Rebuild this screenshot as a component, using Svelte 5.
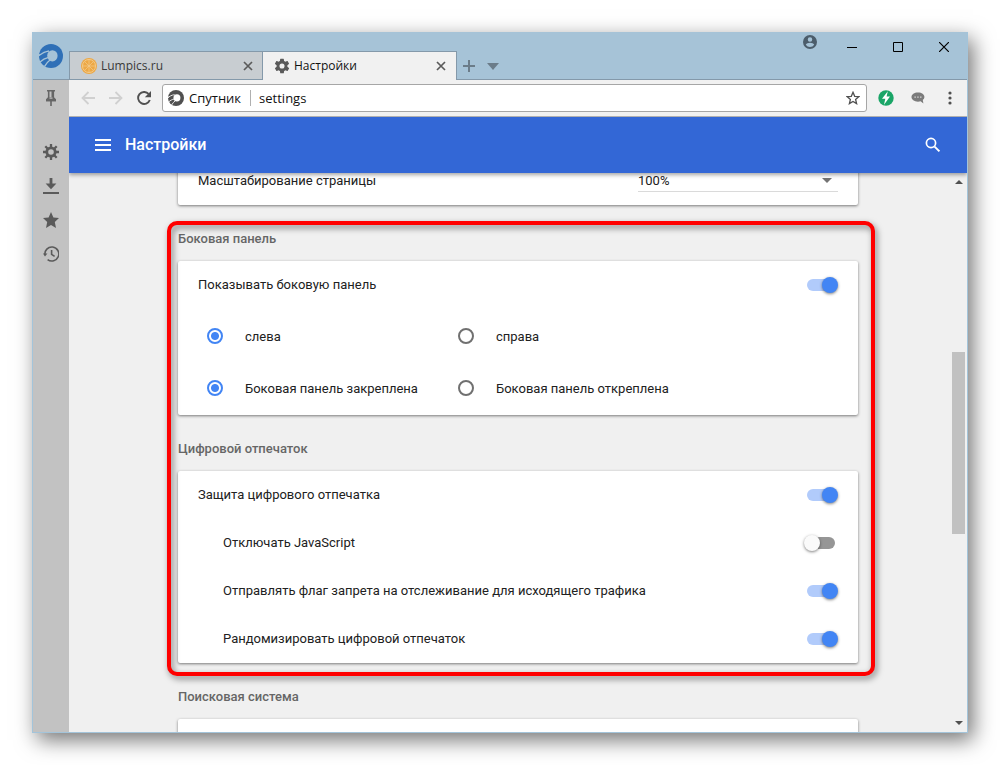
<script>
  const sideItems = [
    { id: 'settings', label: 'Настройки' },
    { id: 'downloads', label: 'Загрузки' },
    { id: 'favourites', label: 'Избранное' },
    { id: 'history', label: 'История' }
  ];

  let showPanel = $state(true);
  let side = $state('left');
  let pinned = $state('pinned');
  let zoom = $state('100%');

  let fingerprint = $state([
    { id: 'protect', label: 'Защита цифрового отпечатка', on: true, nested: false },
    { id: 'nojs', label: 'Отключать JavaScript', on: false, nested: true },
    { id: 'dnt', label: 'Отправлять флаг запрета на отслеживание для исходящего трафика', on: true, nested: true },
    { id: 'random', label: 'Рандомизировать цифровой отпечаток', on: true, nested: true }
  ]);
</script>

{#snippet swirl(id)}
  <svg class="swirl" viewBox="0 0 24 24" aria-hidden="true">
    <mask id={id}>
      <rect width="24" height="24" fill="#fff" />
      <ellipse cx="13.4" cy="11.8" rx="5.2" ry="5.6" fill="#000" />
      <path d="M-1 12.4C2 9.6 5 7.600 10 7M1 18C3.500 15.600 6 14.200 9.500 13.400M5.600 22.400C7 20 8.500 17.800 11 16" fill="none" stroke="#000" stroke-width="1.300" />
      <path d="M-1 9.500L1.500 10.500-.5 12.800z" fill="#000" />
    </mask>
    <circle cx="12" cy="12" r="12" fill="currentColor" mask="url(#{id})" />
  </svg>
{/snippet}

{#snippet cross()}
  <svg width="16" height="16" viewBox="0 0 16 16" aria-hidden="true"><path d="M4 4l8 8M12 4l-8 8" fill="none" stroke="#5a5a5a" stroke-width="1.7" /></svg>
{/snippet}

<div class="window">
  <header class="titlebar">
    <div class="brand">{@render swirl('brand-cut')}</div>
    <nav class="tabs" aria-label="Вкладки">
      <div class="tab">
        <svg width="16" height="16" viewBox="0 0 16 16" aria-hidden="true">
          <circle cx="8" cy="8" r="8" fill="#eda845" />
          <circle cx="8" cy="8" r="6.5" fill="none" stroke="#f3cb8c" stroke-width="1" />
          <path d="M8 2v12M2 8h12M3.8 3.8l8.4 8.4M12.2 3.8l-8.4 8.4" stroke="#f3cb8c" stroke-width=".7" />
        </svg>
        <span>Lumpics.ru</span>
        <button aria-label="Закрыть вкладку">{@render cross()}</button>
      </div>
      <div class="tab active">
        <svg width="16" height="16" viewBox="1 1 22 22" aria-hidden="true"><path fill="#5a5a5a" d="M19.4 13a7.500 7.500 0 0 0 0-2l2.100-1.650a.5.5 0 0 0 .12-.64l-2-3.460a.5.5 0 0 0-.61-.22l-2.490 1a7.300 7.300 0 0 0-1.690-.98l-.38-2.650A.5.5 0 0 0 14 2h-4a.5.5 0 0 0-.49.42l-.38 2.650a7.700 7.700 0 0 0-1.690.98l-2.490-1a.5.5 0 0 0-.61.22l-2 3.460a.5.5 0 0 0 .12.64L4.600 11a7.900 7.900 0 0 0 0 2l-2.110 1.650a.5.5 0 0 0-.12.64l2 3.460c.12.220.39.300.61.220l2.490-1c.52.400 1.080.730 1.690.980l.38 2.650c.03.240.24.420.49.420h4c.25 0 .46-.18.49-.42l.38-2.650a7.700 7.700 0 0 0 1.690-.98l2.490 1c.23.090.49 0 .61-.22l2-3.460a.5.5 0 0 0-.12-.64zM12 15.500a3.500 3.500 0 1 1 0-7 3.500 3.500 0 0 1 0 7z" /></svg>
        <span>Настройки</span>
        <button aria-label="Закрыть вкладку">{@render cross()}</button>
      </div>
      <button class="tab-tool" aria-label="Новая вкладка"><svg width="12" height="12" viewBox="0 0 12 12"><path d="M6 0v12M0 6h12" stroke="#6b7c89" stroke-width="2" /></svg></button>
      <button class="tab-tool" aria-label="Список вкладок"><svg width="12" height="8" viewBox="0 0 12 8"><path d="M0 1h12L6 8z" fill="#6b7c89" /></svg></button>
    </nav>
    <div class="controls">
      <button class="profile" aria-label="Профиль"><svg width="14" height="14" viewBox="2 2 20 20"><path fill="#4c5d6b" d="M12 2a10 10 0 1 0 0 20 10 10 0 0 0 0-20zm0 3.200a3.200 3.200 0 1 1 0 6.400 3.200 3.200 0 0 1 0-6.400zm0 14a7.200 7.200 0 0 1-6-3.220c.03-1.990 4-3.080 6-3.080s5.970 1.090 6 3.080a7.200 7.200 0 0 1-6 3.220z" /></svg></button>
      <button aria-label="Свернуть"><svg width="10" height="10"><path d="M0 5.500h10" stroke="#000" /></svg></button>
      <button aria-label="Развернуть"><svg width="10" height="10"><path d="M.5.500h9v9h-9z" fill="none" stroke="#000" /></svg></button>
      <button aria-label="Закрыть"><svg width="10" height="10"><path d="M0 0l10 10M10 0L0 10" stroke="#000" stroke-width="1.200" /></svg></button>
    </div>
  </header>

  <div class="body">
    <aside class="sidebar">
      <button class="pin" aria-label="Закрепить"><svg width="12" height="16" viewBox="0 0 12 16"><path d="M2 .8h8M3.700 1v7M8.300 1v7M1 10.400h10M6 11v5" fill="none" stroke="#666" stroke-width="1.600" /><path d="M3 7.200h6l2 2v2H1v-2zM6.500 1H9v7H6.500z" fill="#666" /><path d="M4.500 7.500h3v1.200h-3z" fill="#c2c2c2" /></svg></button>
      {#each sideItems as item (item.id)}
        <button aria-label={item.label}>
          {#if item.id === 'settings'}
            <svg width="16" height="16" viewBox="0 0 16 16"><circle cx="8" cy="8" r="4.200" fill="none" stroke="#5a5a5a" stroke-width="2.800" /><path d="M8 0v3M8 13v3M0 8h3M13 8h3M2.300 2.300l2.200 2.200M11.500 11.500l2.200 2.200M13.700 2.300l-2.200 2.200M4.500 11.500l-2.200 2.200" stroke="#5a5a5a" stroke-width="2.300" /></svg>
          {:else if item.id === 'downloads'}
            <svg width="16" height="16" viewBox="0 0 16 16"><path d="M6.600 0h2.800v5.600H13.400L8 11.200 2.600 5.600h4zM0 14h16v2H0z" fill="#5a5a5a" /></svg>
          {:else if item.id === 'favourites'}
            <svg width="16" height="16" viewBox="0 0 16 16"><path d="M8 0l2.400 5.400 5.600.6-4.200 3.900L13 16l-5-3.100L3 16l1.200-6.100L0 6l5.600-.6z" fill="#5a5a5a" /></svg>
          {:else}
            <svg width="16" height="16" viewBox="0 0 16 16"><path d="M1.900 9A7 7 0 1 1 4.600 13.600M8.600 4v4.400l3 2" fill="none" stroke="#5a5a5a" stroke-width="1.600" /><path d="M0 7.600h4.400L2 10.400z" fill="#5a5a5a" /></svg>
          {/if}
        </button>
      {/each}
    </aside>

    <main>
      <div class="toolbar">
        <button aria-label="Назад"><svg width="14" height="14" viewBox="0 0 14 14"><path d="M14 7H1.500M7.500 1L1.500 7l6 6" fill="none" stroke="#d0d0d0" stroke-width="1.800" /></svg></button>
        <button aria-label="Вперёд"><svg width="14" height="14" viewBox="0 0 14 14"><path d="M0 7h12.500M6.500 1l6 6-6 6" fill="none" stroke="#d0d0d0" stroke-width="1.800" /></svg></button>
        <button aria-label="Обновить"><svg width="14" height="14" viewBox="0 0 14 14"><path d="M11.600 2.900A6 6 0 1 0 12.800 9" fill="none" stroke="#505050" stroke-width="1.900" /><path d="M14 0v6.200H7.800z" fill="#505050" /></svg></button>
        <form class="address">
          {@render swirl('address-cut')}
          <label for="url">Спутник</label>
          <input id="url" type="text" value="settings" />
          <button type="button" aria-label="В избранное"><svg width="14" height="14" viewBox="0 0 14 14"><path d="M7 1.300l1.700 4 4.200.3-3.300 2.800 1 4.200L7 10.400l-3.600 2.200 1-4.200L1.100 5.600l4.200-.3z" fill="none" stroke="#505050" stroke-width="1.300" /></svg></button>
        </form>
        <button class="ext" aria-label="Турбо"><svg width="16" height="16" viewBox="0 0 16 16"><circle cx="8" cy="8" r="7.700" fill="#1aa567" /><path d="M9.800 1.200L4 8.700h3.300L6 14.800l6-8.200H8.600z" fill="#fff" /></svg></button>
        <button class="ext" aria-label="Отзыв"><svg width="14" height="12" viewBox="0 0 14 12"><path d="M7 .5C3.200.5.500 2.500.500 5s2.700 4.700 6.500 4.700c1 0 1.800-.1 2.600-.4L12.400 11.500l-.6-3.500c1-.8 1.600-1.800 1.600-3C13.400 2.500 10.800.5 7 .5z" fill="#7b7b7b" /><path d="M3.400 4.400h1.500v1.400H3.400zM6.200 4.400h1.500v1.400H6.200zM9 4.400h1.500v1.400H9z" fill="#d2d2d2" /></svg></button>
        <button class="ext" aria-label="Меню"><svg width="4" height="14" viewBox="0 0 4 14"><g fill="#505050"><circle cx="2" cy="2" r="1.600" /><circle cx="2" cy="7" r="1.600" /><circle cx="2" cy="12" r="1.600" /></g></svg></button>
      </div>

      <div class="appbar">
        <button aria-label="Главное меню"><svg width="16" height="12" viewBox="0 0 16 12"><path d="M0 0h16v2H0zM0 5h16v2H0zM0 10h16v2H0z" fill="#fff" /></svg></button>
        <h1>Настройки</h1>
        <button aria-label="Поиск"><svg width="16" height="16" viewBox="0 0 16 16"><circle cx="6" cy="6" r="4.600" fill="none" stroke="#fff" stroke-width="1.700" /><path d="M9.600 9.600l4.800 4.800" stroke="#fff" stroke-width="2" /></svg></button>
      </div>

      <div class="viewport">
        <div class="content">
          <div class="card scrolled">
            <div class="row">
              <label for="zoom">Масштабирование страницы</label>
              <span class="select">
                <select id="zoom" bind:value={zoom}>
                  <option>75%</option><option>100%</option><option>125%</option>
                </select>
                <svg width="10" height="5" viewBox="0 0 10 5" aria-hidden="true"><path d="M0 0h10L5 5z" fill="#737373" /></svg>
              </span>
            </div>
          </div>

          <div class="marked">
            <section>
              <h2>Боковая панель</h2>
              <div class="card">
                <div class="row">
                  <label for="show-panel">Показывать боковую панель</label>
                  <input id="show-panel" class="toggle" type="checkbox" bind:checked={showPanel} />
                </div>
                <div class="choices">
                  <label><input type="radio" name="side" value="left" bind:group={side} /><span>слева</span></label>
                  <label><input type="radio" name="side" value="right" bind:group={side} /><span>справа</span></label>
                  <label><input type="radio" name="pinned" value="pinned" bind:group={pinned} /><span>Боковая панель закреплена</span></label>
                  <label><input type="radio" name="pinned" value="free" bind:group={pinned} /><span>Боковая панель откреплена</span></label>
                </div>
              </div>
            </section>
            <section>
              <h2>Цифровой отпечаток</h2>
              <div class="card">
                {#each fingerprint as option (option.id)}
                  <div class="row" class:nested={option.nested}>
                    <label for={option.id}>{option.label}</label>
                    <input id={option.id} class="toggle" type="checkbox" bind:checked={option.on} />
                  </div>
                {/each}
              </div>
            </section>
            <div class="frame"></div>
          </div>

          <section>
            <h2>Поисковая система</h2>
            <div class="card"><div class="row"></div></div>
          </section>
        </div>
        <div class="scrollbar" aria-hidden="true">
          <svg width="8" height="4" viewBox="0 0 8 4"><path d="M0 4h8L4 0z" fill="#505050" /></svg>
          <div class="track"><div class="thumb"></div></div>
          <svg width="8" height="4" viewBox="0 0 8 4"><path d="M0 0h8L4 4z" fill="#505050" /></svg>
        </div>
      </div>
    </main>
  </div>
</div>

<style>
  :global(body) {
    background: #fff;
  }
  .window {
    box-sizing: border-box;
    display: flex;
    flex-direction: column;
    height: calc(100vh - 64px);
    margin: 32px;
    border: 1px solid #a3c4da;
    border-top: 0;
    background: #f0f0f0;
    box-shadow: 5px 7px 20px rgba(0, 0, 0, 0.55);
    font-family: Roboto, "Liberation Sans", sans-serif;
    font-size: 13px;
    line-height: 20px;
    color: #212121;
  }
  button {
    display: flex;
    align-items: center;
    justify-content: center;
    flex: none;
    padding: 0;
    border: 0;
    background: none;
  }
  svg {
    display: block;
    flex: none;
  }

  .titlebar {
    display: flex;
    height: 48px;
    flex: none;
    background: #a6c3d7;
    box-shadow: inset 0 -1px #8499aa;
  }
  .brand {
    display: flex;
    align-items: center;
    justify-content: center;
    width: 36px;
    color: #2f70b7;
  }
  .brand .swirl {
    width: 24px;
    height: 24px;
  }
  .tabs {
    display: flex;
    align-self: flex-end;
    flex: 1;
    height: 29px;
    font-family: "Open Sans", "Noto Sans", sans-serif;
    font-size: 12px;
  }
  .tab {
    box-sizing: border-box;
    display: flex;
    align-items: center;
    gap: 4px;
    width: 193px;
    padding: 0 6px 0 11px;
    border: 1px solid #8499aa;
    border-right: 0;
    background: #c8cdd1;
    color: #3a3a3a;
  }
  .tab span {
    flex: 1;
  }
  .tab.active {
    width: 195px;
    padding-right: 7px;
    border-right: 1px solid #8499aa;
    border-bottom: 0;
    background: #f1f1f1;
    color: #111;
  }
  .tab-tool {
    width: 24px;
  }
  .controls {
    display: flex;
  }
  .controls button {
    width: 46px;
    height: 30px;
  }
  .controls .profile {
    width: 38px;
    height: 20px;
  }

  .body {
    display: flex;
    flex: 1;
    min-height: 0;
  }
  .sidebar {
    width: 36px;
    flex: none;
    background: #c2c2c2;
  }
  .sidebar button {
    width: 100%;
    height: 34px;
  }
  .sidebar .pin {
    margin: 1px 0 20px;
  }
  main {
    display: flex;
    flex-direction: column;
    flex: 1;
    min-width: 0;
  }
  .toolbar {
    display: flex;
    align-items: center;
    height: 36px;
    flex: none;
    padding: 0 1px 0 5px;
    border-bottom: 1px solid #b0b0b0;
    background: #f1f1f1;
  }
  .toolbar > button {
    width: 28px;
    height: 28px;
  }
  .toolbar > .ext {
    width: 32px;
  }
  .address {
    box-sizing: border-box;
    display: flex;
    align-items: center;
    flex: 1;
    height: 28px;
    margin: 0 3px 0 4px;
    padding: 0 6px 0 5px;
    border: 1px solid #a6a6a6;
    border-radius: 3px;
    background: #fff;
    color: #505050;
    font-family: "Open Sans", "Noto Sans", sans-serif;
    font-size: 13px;
  }
  .address .swirl {
    width: 16px;
    height: 16px;
  }
  .address label {
    margin-left: 5px;
    padding-right: 9px;
    border-right: 1px solid #b0b0b0;
    line-height: 16px;
    color: #111;
  }
  .address input {
    flex: 1;
    min-width: 0;
    padding: 0 8px;
    border: 0;
    outline: 0;
    background: none;
    font: inherit;
    color: #111;
  }

  .appbar {
    position: relative;
    z-index: 1;
    display: flex;
    align-items: center;
    height: 56px;
    flex: none;
    padding: 0 26px;
    background: #3367d6;
    box-shadow: 0 2px 4px rgba(0, 0, 0, 0.35);
    clip-path: inset(0 0 -8px);
  }
  h1 {
    flex: 1;
    margin: 0 14px;
    font-size: 16px;
    font-weight: 500;
    color: #fff;
  }

  .viewport {
    display: grid;
    grid-template-columns: minmax(0, 1fr) 17px;
    flex: 1;
    min-height: 0;
    padding-left: 17px;
    overflow: hidden;
  }
  .content {
    width: 100%;
    max-width: 680px;
    min-height: 0;
    margin: 0 auto;
  }
  h2 {
    margin: 0;
    padding: 24px 0 12px;
    font-size: 13px;
    font-weight: 500;
    color: #666;
  }
  .card {
    border-radius: 2px;
    background: #fff;
    box-shadow: 0 1px 3px rgba(0, 0, 0, 0.5);
  }
  .scrolled {
    margin-top: -16px;
  }
  .row {
    display: flex;
    align-items: center;
    justify-content: space-between;
    height: 48px;
    padding: 0 20px;
  }
  .nested {
    padding-left: 45px;
  }
  .select {
    display: grid;
    align-items: center;
    width: 200px;
    height: 21px;
    border-bottom: 1px solid #dadada;
  }
  .select select,
  .select svg {
    grid-area: 1 / 1;
  }
  .select svg {
    justify-self: end;
    margin-right: 6px;
    pointer-events: none;
  }
  select {
    appearance: none;
    width: 100%;
    padding: 0;
    border: 0;
    background: none;
    font: inherit;
    color: inherit;
  }
  .choices {
    display: grid;
    grid-template-columns: 251px 1fr;
    grid-auto-rows: 52px;
    padding: 1px 29px;
  }
  .choices label {
    display: flex;
    align-items: center;
    gap: 22px;
  }
  .choices span {
    padding-top: 2px;
  }
  input[type="radio"] {
    appearance: none;
    box-sizing: border-box;
    width: 16px;
    height: 16px;
    margin: 0;
    border: 2px solid #707070;
    border-radius: 50%;
  }
  input[type="radio"]:checked {
    border-color: #4285f4;
    background: radial-gradient(circle, #4285f4 3.5px, #fff 4.5px);
  }
  .toggle {
    appearance: none;
    display: grid;
    align-items: center;
    width: 34px;
    height: 16px;
    margin: 0;
  }
  .toggle::before,
  .toggle::after {
    content: "";
    grid-area: 1 / 1;
  }
  .toggle::before {
    height: 12px;
    margin: 0 3px;
    border-radius: 6px;
    background: #969696;
  }
  .toggle::after {
    width: 16px;
    height: 16px;
    border-radius: 50%;
    background: #fafafa;
    box-shadow: 0 1px 3px rgba(0, 0, 0, 0.5);
  }
  .toggle:checked::before {
    background: #b1cbfb;
  }
  .toggle:checked::after {
    justify-self: end;
    background: #4285f4;
  }
  .marked {
    position: relative;
  }
  .frame {
    position: absolute;
    inset: 16px -17px -13px -11px;
    border: 4px solid #f00;
    border-radius: 10px;
    filter: drop-shadow(2px 3px 3px rgba(0, 0, 0, 0.5));
    pointer-events: none;
  }

  .scrollbar {
    display: flex;
    flex-direction: column;
    align-items: center;
    min-height: 0;
    padding: 7px 0;
  }
  .track {
    display: grid;
    grid-template-rows: 161fr 182fr 180fr;
    flex: 1;
    width: 13px;
    margin: 7px 0;
  }
  .thumb {
    grid-row: 2;
    background: #c1c1c1;
  }
</style>
